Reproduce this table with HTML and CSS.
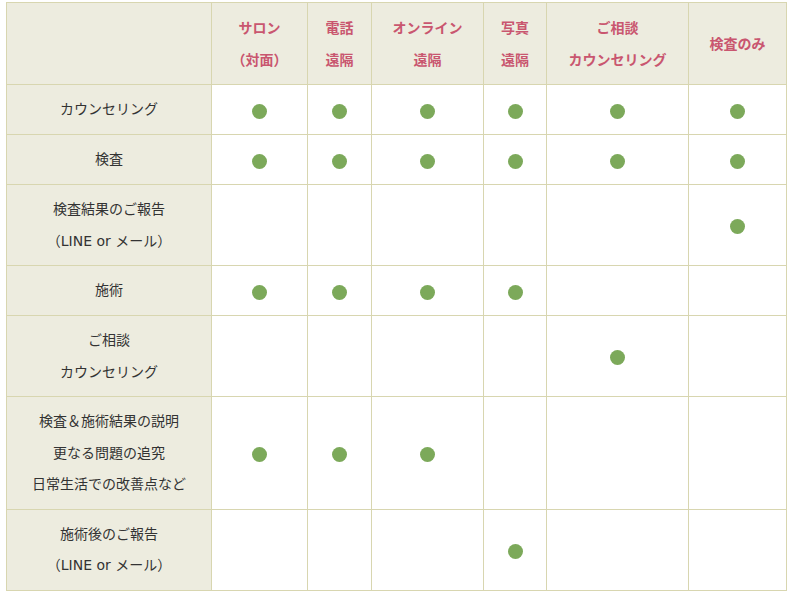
FILE: index.html
```html
<!DOCTYPE html>
<html lang="ja">
<head>
<meta charset="utf-8">
<link rel="stylesheet" href="styles.css">
</head>
<body>
<table class="plan">
  <colgroup>
    <col class="c0"><col class="c1"><col class="c2"><col class="c3"><col class="c4"><col class="c5"><col class="c6">
  </colgroup>
  <thead>
    <tr>
      <th class="blank"></th>
      <th>サロン<br>（対面）</th>
      <th>電話<br>遠隔</th>
      <th>オンライン<br>遠隔</th>
      <th>写真<br>遠隔</th>
      <th>ご相談<br>カウンセリング</th>
      <th>検査のみ</th>
    </tr>
  </thead>
  <tbody>
    <tr>
      <th>カウンセリング</th>
      <td><span class="dot"></span></td><td><span class="dot"></span></td><td><span class="dot"></span></td><td><span class="dot"></span></td><td><span class="dot"></span></td><td><span class="dot"></span></td>
    </tr>
    <tr>
      <th>検査</th>
      <td><span class="dot"></span></td><td><span class="dot"></span></td><td><span class="dot"></span></td><td><span class="dot"></span></td><td><span class="dot"></span></td><td><span class="dot"></span></td>
    </tr>
    <tr>
      <th>検査結果のご報告<br>（LINE or メール）</th>
      <td></td><td></td><td></td><td></td><td></td><td><span class="dot"></span></td>
    </tr>
    <tr>
      <th>施術</th>
      <td><span class="dot"></span></td><td><span class="dot"></span></td><td><span class="dot"></span></td><td><span class="dot"></span></td><td></td><td></td>
    </tr>
    <tr>
      <th>ご相談<br>カウンセリング</th>
      <td></td><td></td><td></td><td></td><td><span class="dot"></span></td><td></td>
    </tr>
    <tr>
      <th>検査＆施術結果の説明<br>更なる問題の追究<br>日常生活での改善点など</th>
      <td><span class="dot"></span></td><td><span class="dot"></span></td><td><span class="dot"></span></td><td></td><td></td><td></td>
    </tr>
    <tr>
      <th>施術後のご報告<br>（LINE or メール）</th>
      <td></td><td></td><td></td><td><span class="dot"></span></td><td></td><td></td>
    </tr>
  </tbody>
</table>
</body>
</html>
```

FILE: styles.css
```css
html, body {
  margin: 0;
  padding: 0;
  background: #ffffff;
}
body {
  padding: 2px 0 0 6px;
  font-family: "DejaVu Sans", "Noto Sans CJK JP", sans-serif;
  font-size: 14px;
  color: #333333;
}
.plan {
  border-collapse: collapse;
  table-layout: fixed;
  width: 780px;
}
.c0 { width: 205px; }
.c1 { width: 96px; }
.c2 { width: 64px; }
.c3 { width: 112px; }
.c4 { width: 63px; }
.c5 { width: 142px; }
.c6 { width: 98px; }
.plan th, .plan td {
  border: 1px solid #d8d6b0;
  text-align: center;
  vertical-align: middle;
  line-height: 32px;
  padding: 9px 0 8px;
}
.plan tbody th {
  line-height: 31.5px;
}
.plan th {
  background: #edecdf;
  font-weight: normal;
}
.plan thead th {
  color: #c9566f;
  font-weight: 600;
}
.plan td {
  background: #ffffff;
}
.dot {
  display: inline-block;
  width: 15px;
  height: 15px;
  border-radius: 50%;
  background: #7ca95a;
  vertical-align: middle;
}
```
